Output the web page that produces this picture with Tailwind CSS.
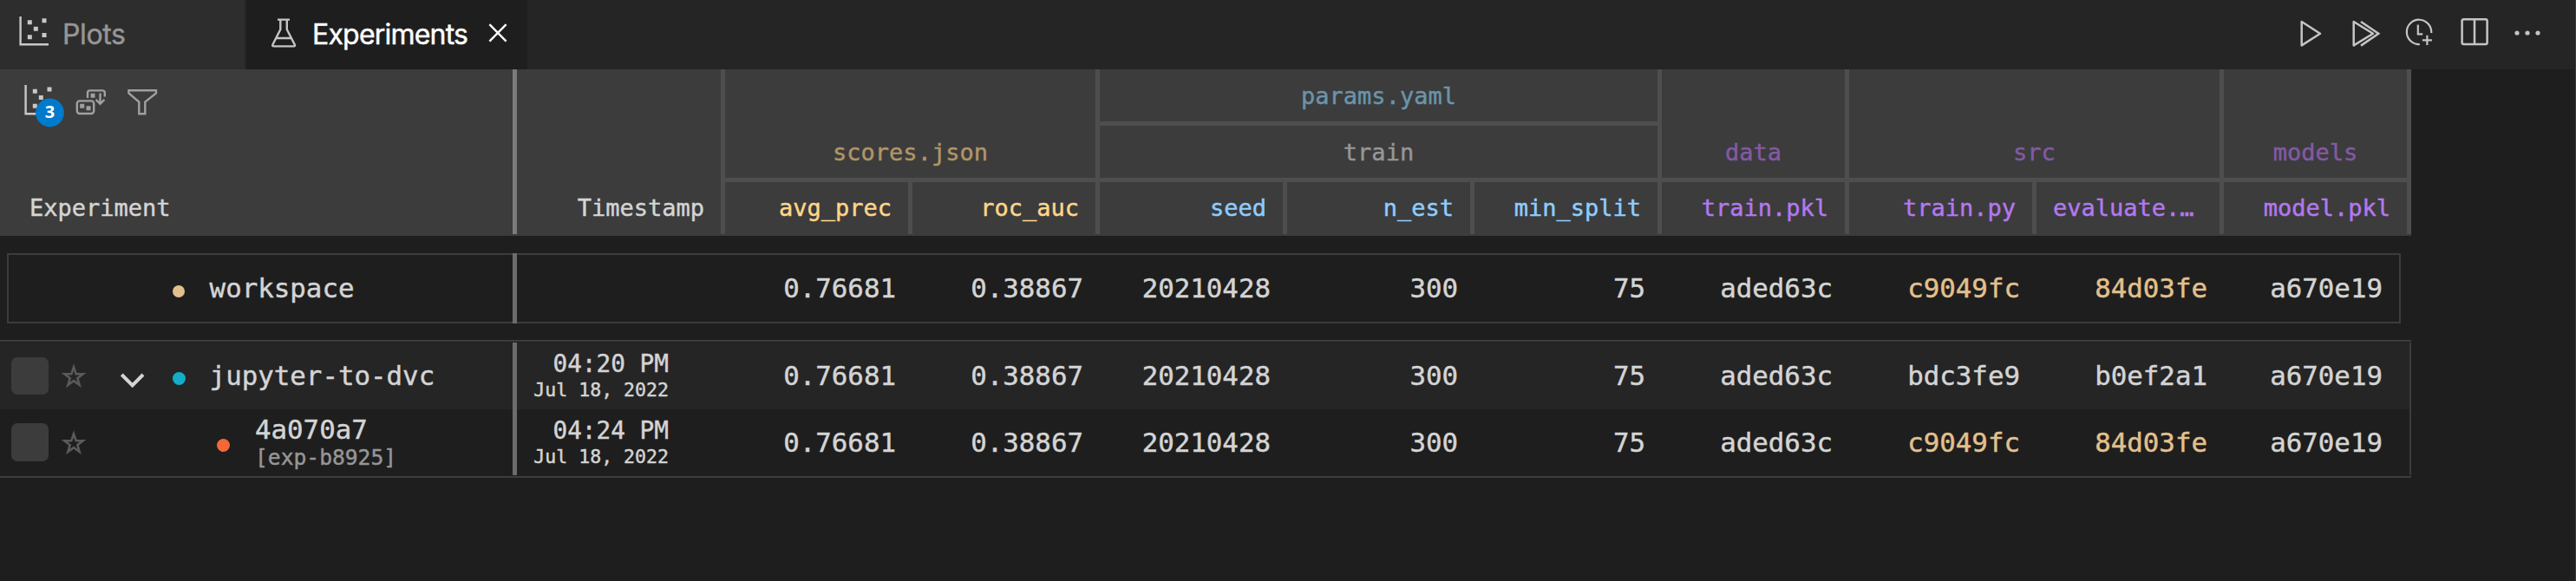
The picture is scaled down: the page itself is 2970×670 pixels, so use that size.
<!DOCTYPE html>
<html lang="en">
<head>
<meta charset="utf-8">
<title>Experiments</title>
<script src="https://cdn.jsdelivr.net/npm/@tailwindcss/browser@4"></script>
</head>
<body class="h-[670px] w-[2970px] overflow-hidden bg-[#1e1e1e]">
<div class="flex h-full w-full flex-col border-r border-[#3a3a3a] font-['DejaVu_Sans_Mono',monospace] text-[#d4d4d4] [-webkit-text-stroke:0.45px]">

  <!-- Tab bar -->
  <header class="flex h-[80px] shrink-0 bg-[#252526] font-['Inter',sans-serif] text-[32px] leading-[80px] tracking-[-0.8px]">
    <div class="mr-[2px] flex w-[282px] bg-[#2d2d2d] tracking-[-0.4px] text-[#969696]">
      <svg class="h-[80px] w-[72px] shrink-0" viewBox="0 0 72 80" fill="none">
        <path d="M23.6 19V51.2H56" stroke="#c8c8c8" stroke-width="2.4"/>
        <path d="M31.8 23.3h5v5h-5zM48.5 21.3h5v5h-5zM38.8 30.7h5v5h-5zM31.8 40.3h5v5h-5zM48.5 38h5v5h-5z" fill="#c8c8c8"/>
      </svg>
      <span>Plots</span>
    </div>
    <div class="flex w-[324px] bg-[#1e1e1e] text-white">
      <svg class="h-[80px] w-[76px] shrink-0" viewBox="284 0 76 80" fill="none" stroke="#c5c5c5" stroke-width="2.4">
        <path d="M320 22.6H334M323.3 22.6V34L314.4 51.4Q313.6 53.4 315.6 53.4H338.6Q340.6 53.4 339.8 51.4L330.8 34V22.6M318.4 44H335.8"/>
      </svg>
      <span class="w-[200px]">Experiments</span>
      <svg class="h-[80px] w-[30px] shrink-0" viewBox="560 0 30 80" fill="none" stroke="#fff" stroke-width="2.4">
        <path d="M564.4 28.2L583.6 47.6M583.6 28.2L564.4 47.6"/>
      </svg>
    </div>
    <svg class="ml-auto h-[80px] w-[329px]" viewBox="2640 0 329 80" fill="none" stroke="#c5c5c5" stroke-width="2.5">
      <path d="M2653.7 25L2675 38.7L2653.7 52.4Z" stroke-linejoin="round"/>
      <path d="M2713.7 25L2736 38.7L2713.7 52.4Z" stroke-linejoin="round"/>
      <path d="M2722 25L2742.3 38.7L2722 52.6"/>
      <path d="M2803.2 38A14.2 14.2 0 1 0 2789.8 51.1" stroke-width="2.2"/>
      <path d="M2787.8 28.5V39.3H2793.2M2798.4 40.8V52M2792.9 46.3H2803.9" stroke-width="2.2"/>
      <rect x="2838.6" y="22.2" width="29" height="28.8" rx="2"/>
      <path d="M2853 22V51"/>
      <g fill="#c5c5c5" stroke="none"><circle cx="2902" cy="38" r="2.6"/><circle cx="2914" cy="38" r="2.6"/><circle cx="2926" cy="38" r="2.6"/></g>
    </svg>
  </header>

  <!-- Column headers -->
  <div class="flex h-[192px] w-[2780px] shrink-0 bg-[#3c3c3c] pb-[2px] text-[27px] leading-[60px]">
    <div class="flex w-[596px] flex-col justify-between border-r-[5px] border-[#7b7b7b]">
      <svg class="h-[70px] w-[200px]" viewBox="0 80 200 70" fill="none" stroke="#a0a0a0" stroke-width="2.4">
        <path d="M29.6 98V131.2H62" stroke="#c8c8c8"/>
        <path d="M37.8 102.8h5v5h-5zM54.5 100.5h5v5h-5zM44.8 110h5v5h-5zM37.8 119.8h5v5h-5z" fill="#c8c8c8" stroke="none"/>
        <circle cx="57.5" cy="130" r="16.4" fill="#007acc" stroke="none"/>
        <text x="57.5" y="136.4" text-anchor="middle" fill="#fff" stroke="none" class="font-['Noto_Sans',sans-serif] text-[20px] font-bold">3</text>
        <rect x="88.8" y="116.4" width="19.4" height="14.6" rx="3"/>
        <path d="M101 113V107Q101 104.4 103.6 104.4H118Q120.8 104.4 120.8 107V111.5M115.5 107.5V120M110.6 114.8L115.5 119.8L120.4 114.8"/>
        <path d="M92.2 119.8h5v5h-5zM99.5 122.2h5v5h-5zM104.5 107.8h5v5h-5z" fill="#a0a0a0" stroke="none"/>
        <path d="M148.4 104.3H180V107.4L167.3 117.6V131.2H160.3V117.6L148.4 107.4Z"/>
      </svg>
      <div class="pl-[34px]">Experiment</div>
    </div>
    <div class="flex w-[240px] items-end justify-end border-r-[5px] border-[#4e4e4e] pr-[19px]">Timestamp</div>

    <div class="flex w-[432px] flex-col">
      <div class="flex h-[130px] items-end justify-center border-r-[5px] border-b-[5px] border-[#4e4e4e] text-[#b19567]"><span class="h-[59px]">scores.json</span></div>
      <div class="flex text-right text-[#ffd58a]">
        <div class="h-[60px] w-[216px] border-r-[5px] border-[#4e4e4e] pr-[19px]">avg_prec</div>
        <div class="h-[60px] w-[216px] border-r-[5px] border-[#4e4e4e] pr-[19px]">roc_auc</div>
      </div>
    </div>

    <div class="flex w-[648px] flex-col">
      <div class="h-[65px] border-r-[5px] border-b-[5px] border-[#4e4e4e] pt-px text-center text-[#6a94ab]">params.yaml</div>
      <div class="h-[65px] border-r-[5px] border-b-[5px] border-[#4e4e4e] pt-px text-center text-[#969696]">train</div>
      <div class="flex text-right text-[#8ecdff]">
        <div class="h-[60px] w-[216px] border-r-[5px] border-[#4e4e4e] pr-[19px]">seed</div>
        <div class="h-[60px] w-[216px] border-r-[5px] border-[#4e4e4e] pr-[19px]">n_est</div>
        <div class="h-[60px] w-[216px] border-r-[5px] border-[#4e4e4e] pr-[19px]">min_split</div>
      </div>
    </div>

    <div class="flex w-[216px] flex-col">
      <div class="flex h-[130px] items-end justify-center border-r-[5px] border-b-[5px] border-[#4e4e4e] text-[#8359a3]"><span class="h-[59px]">data</span></div>
      <div class="h-[60px] border-r-[5px] border-[#4e4e4e] pr-[19px] text-right text-[#b378ee]">train.pkl</div>
    </div>

    <div class="flex w-[432px] flex-col">
      <div class="flex h-[130px] items-end justify-center border-r-[5px] border-b-[5px] border-[#4e4e4e] text-[#8359a3]"><span class="h-[59px]">src</span></div>
      <div class="flex text-[#b378ee]">
        <div class="h-[60px] w-[216px] border-r-[5px] border-[#4e4e4e] pr-[19px] text-right">train.py</div>
        <div class="h-[60px] w-[216px] border-r-[5px] border-[#4e4e4e] pl-[19px]">evaluate.…</div>
      </div>
    </div>

    <div class="flex w-[216px] flex-col">
      <div class="flex h-[130px] items-end justify-center border-r-[5px] border-b-[5px] border-[#4e4e4e] text-[#8359a3]"><span class="h-[59px]">models</span></div>
      <div class="h-[60px] border-r-[5px] border-[#4e4e4e] pr-[19px] text-right text-[#b378ee]">model.pkl</div>
    </div>
  </div>

  <!-- Workspace row -->
  <div class="mt-[20px] ml-[8px] flex h-[81px] w-[2760px] shrink-0 border-2 border-[#3c3c3c] text-[30.8px] leading-[77px]">
    <div class="-my-[2px] flex w-[586px] border-r-[5px] border-[#6c6c6c] py-[2px]">
      <i class="mt-[35px] ml-[189px] size-[14px] rounded-full bg-[#e2c08d]"></i>
      <span class="ml-[28.6px]">workspace</span>
    </div>
    <div class="w-[240px]"></div>
    <div class="flex text-right">
      <span class="w-[216px] pr-[19px]">0.76681</span><span class="w-[216px] pr-[19px]">0.38867</span><span class="w-[216px] pr-[19px]">20210428</span><span class="w-[216px] pr-[19px]">300</span><span class="w-[216px] pr-[19px]">75</span><span class="w-[216px] pr-[19px]">aded63c</span><span class="w-[216px] pr-[19px] text-[#e2c08d]">c9049fc</span><span class="w-[216px] pr-[19px] text-[#e2c08d]">84d03fe</span><span class="w-[201.5px] pr-[18.5px]">a670e19</span>
    </div>
  </div>

  <!-- Branch and its experiment -->
  <div class="mt-[19px] w-[2780px] shrink-0 border-y-2 border-[#3c3c3c] py-px text-[30.8px] leading-[77px]">
    <div class="flex h-[77px] border-r-2 border-[#3c3c3c] bg-[#252526]">
      <div class="flex w-[596px] border-r-[5px] border-[#6c6c6c]">
        <i class="mt-[17px] ml-[13px] h-[43px] w-[43px] rounded-[7px] bg-[#3c3c3c]"></i>
        <svg class="mt-[20px] ml-[12px] h-[36px] w-[34px]" viewBox="68 415 34 36" fill="none" stroke="#5a5a5a" stroke-width="2.6"><path d="M85 423.3L87.7 431.3H95.6L89.3 436.2L91.6 444L85 439.2L78.4 444L80.7 436.2L74.4 431.3H82.3Z"/></svg>
        <svg class="mt-[30px] ml-[34px] h-[26px] w-[34px]" viewBox="136 425 34 26" fill="none" stroke="#d4d4d4" stroke-width="4"><path d="M140.3 432L152.7 444.5L165 432"/></svg>
        <i class="mt-[34px] ml-[29px] size-[14.6px] rounded-full bg-[#13adc7]"></i>
        <span class="ml-[28px]">jupyter-to-dvc</span>
      </div>
      <div class="flex w-[240px] flex-col items-end pt-[9px] pr-[65px]">
        <span class="text-[27.72px] leading-[32px]">04:20 PM</span>
        <span class="text-[21.56px] leading-[27px]">Jul 18, 2022</span>
      </div>
      <div class="flex text-right">
        <span class="w-[216px] pr-[19px]">0.76681</span><span class="w-[216px] pr-[19px]">0.38867</span><span class="w-[216px] pr-[19px]">20210428</span><span class="w-[216px] pr-[19px]">300</span><span class="w-[216px] pr-[19px]">75</span><span class="w-[216px] pr-[19px]">aded63c</span><span class="w-[216px] pr-[19px]">bdc3fe9</span><span class="w-[216px] pr-[19px]">b0ef2a1</span><span class="w-[201.5px] pr-[18.5px]">a670e19</span>
      </div>
    </div>
    <div class="flex h-[76px] border-r-2 border-[#3c3c3c]">
      <div class="flex w-[596px] border-r-[5px] border-[#6c6c6c]">
        <i class="mt-[16px] ml-[13px] h-[44px] w-[43px] rounded-[7px] bg-[#3c3c3c]"></i>
        <svg class="mt-[20px] ml-[12px] h-[36px] w-[34px]" viewBox="68 415 34 36" fill="none" stroke="#5a5a5a" stroke-width="2.6"><path d="M85 423.3L87.7 431.3H95.6L89.3 436.2L91.6 444L85 439.2L78.4 444L80.7 436.2L74.4 431.3H82.3Z"/></svg>
        <i class="mt-[34px] ml-[148px] size-[15px] rounded-full bg-[#f46837]"></i>
        <div class="ml-[29px] flex flex-col pt-[5px]">
          <span class="leading-[36px]">4a070a7</span>
          <span class="text-[24.64px] leading-[29px] text-[#969696]">[exp-b8925]</span>
        </div>
      </div>
      <div class="flex w-[240px] flex-col items-end pt-[9px] pr-[65px]">
        <span class="text-[27.72px] leading-[32px]">04:24 PM</span>
        <span class="text-[21.56px] leading-[27px]">Jul 18, 2022</span>
      </div>
      <div class="flex text-right">
        <span class="w-[216px] pr-[19px]">0.76681</span><span class="w-[216px] pr-[19px]">0.38867</span><span class="w-[216px] pr-[19px]">20210428</span><span class="w-[216px] pr-[19px]">300</span><span class="w-[216px] pr-[19px]">75</span><span class="w-[216px] pr-[19px]">aded63c</span><span class="w-[216px] pr-[19px] text-[#e2c08d]">c9049fc</span><span class="w-[216px] pr-[19px] text-[#e2c08d]">84d03fe</span><span class="w-[201.5px] pr-[18.5px]">a670e19</span>
      </div>
    </div>
  </div>
</div>
</body>
</html>
